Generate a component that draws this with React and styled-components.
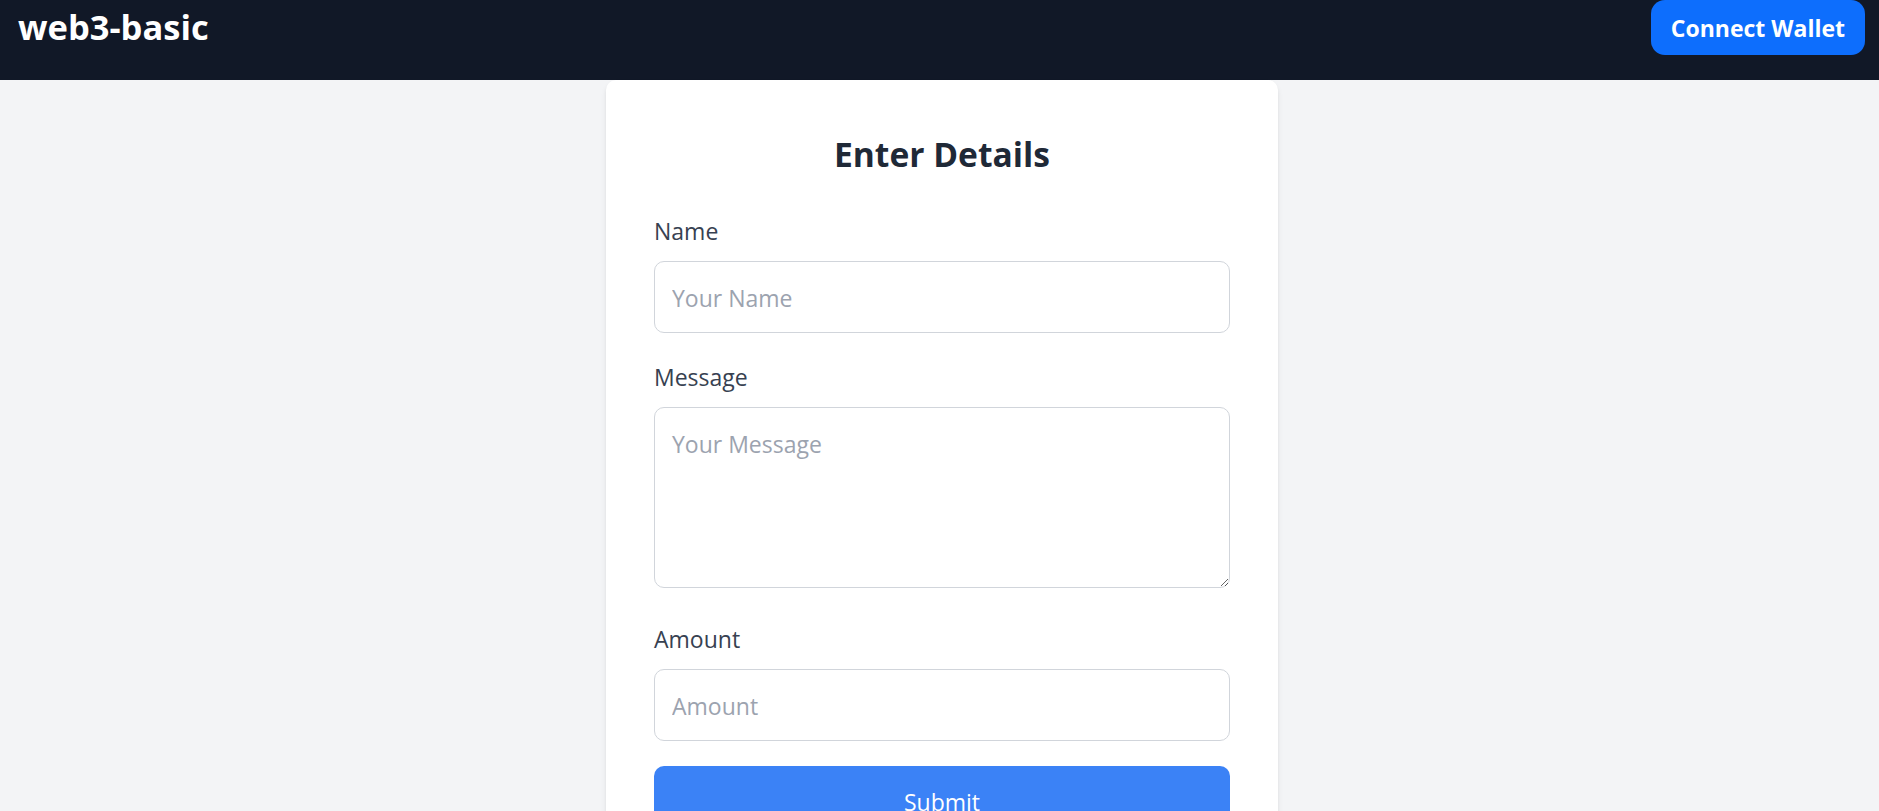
import styled, { createGlobalStyle } from "styled-components";

const GlobalStyle = createGlobalStyle`
  html,
  body {
    margin: 0;
    padding: 0;
    background-color: #f3f4f6;
    font-family: "Open Sans", "Noto Sans", sans-serif;
    overflow: hidden;
  }

  * {
    box-sizing: border-box;
  }
`;

function App() {
  const handleSubmit = (e) => {
    e.preventDefault();
  };

  return (
    <>
      <GlobalStyle />
      <Header>
        <Logo>web3-basic</Logo>
        <WalletButton type="button">Connect Wallet</WalletButton>
      </Header>
      <Main>
        <Card>
          <Title>Enter Details</Title>
          <form onSubmit={handleSubmit}>
            <Field $gap={28}>
              <Label htmlFor="name">Name</Label>
              <Input id="name" type="text" placeholder="Your Name" />
            </Field>
            <Field $gap={35}>
              <Label htmlFor="message">Message</Label>
              <TextArea id="message" placeholder="Your Message" />
            </Field>
            <Field $gap={25}>
              <Label htmlFor="amount">Amount</Label>
              <Input id="amount" type="number" placeholder="Amount" />
            </Field>
            <SubmitButton type="submit">Submit</SubmitButton>
          </form>
        </Card>
      </Main>
    </>
  );
}

export default App;

const Header = styled.header`
  display: flex;
  justify-content: space-between;
  align-items: flex-start;
  height: 80px;
  padding: 0 14px 0 18px;
  background-color: #111827;
`;

const Logo = styled.h1`
  margin: 5px 0 0;
  font-size: 34.5px;
  line-height: 44px;
  font-weight: 700;
  color: #ffffff;
`;

const WalletButton = styled.button`
  height: 55px;
  padding: 0 20px;
  border: none;
  border-radius: 14px;
  background-color: #0d6efd;
  color: #ffffff;
  font-family: inherit;
  font-size: 23px;
  font-weight: 700;
  cursor: pointer;

  &:hover {
    opacity: 0.9;
  }
`;

const Main = styled.main`
  display: flex;
  justify-content: center;
  padding-left: 5px;
`;

const Card = styled.div`
  width: 672px;
  padding: 54px 48px 48px;
  background-color: #ffffff;
  border-radius: 10px;
  box-shadow: 0 4px 6px -1px rgba(0, 0, 0, 0.1), 0 2px 4px -2px rgba(0, 0, 0, 0.1);
`;

const Title = styled.h2`
  margin: 0 0 41px;
  text-align: center;
  font-size: 33.6px;
  line-height: 40px;
  font-weight: 700;
  color: #1f2937;
`;

const Field = styled.div`
  display: flex;
  flex-direction: column;
  margin-bottom: ${(p) => p.$gap ?? 27}px;
`;

const Label = styled.label`
  margin-bottom: 14px;
  font-size: 23px;
  line-height: 32px;
  color: #374151;
`;

const controlStyles = `
  width: 100%;
  padding: 19px 17px 17px;
  border: 1px solid #d1d5db;
  border-radius: 10px;
  background-color: #ffffff;
  font-family: "Open Sans", "Noto Sans", sans-serif;
  font-size: 23px;
  line-height: 34px;
  color: #1f2937;
  outline: none;

  &::placeholder {
    color: #9ca3af;
  }

  &:focus {
    border-color: #3b82f6;
  }
`;

const Input = styled.input`
  ${controlStyles}
  height: 72px;
  -moz-appearance: textfield;

  &::-webkit-outer-spin-button,
  &::-webkit-inner-spin-button {
    -webkit-appearance: none;
    margin: 0;
  }
`;

const TextArea = styled.textarea`
  ${controlStyles}
  display: block;
  height: 181px;
`;

const SubmitButton = styled.button`
  width: 100%;
  height: 72px;
  padding: 0;
  border: none;
  border-radius: 10px;
  background-color: #3b82f6;
  color: #ffffff;
  font-family: inherit;
  font-size: 23px;
  cursor: pointer;

  &:hover {
    background-color: #2563eb;
  }
`;
